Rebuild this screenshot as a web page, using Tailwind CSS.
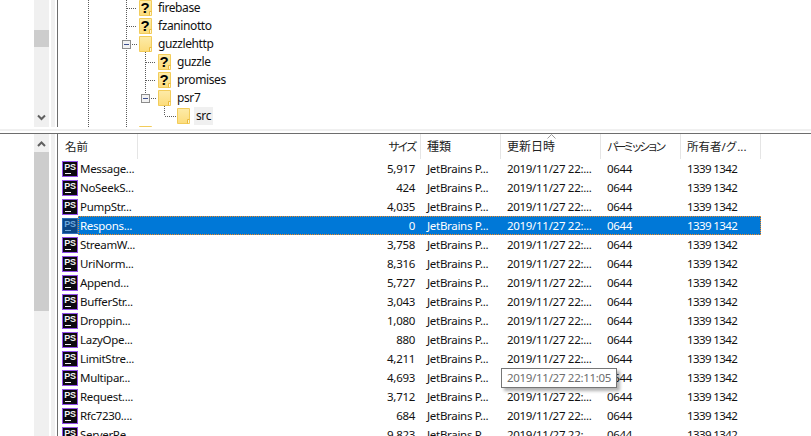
<!DOCTYPE html>
<html lang="ja">
<head>
<meta charset="utf-8">
<script src="https://cdn.jsdelivr.net/npm/@tailwindcss/browser@4"></script>
</head>
<body class="bg-white overflow-hidden">
<svg width="0" height="0" class="absolute">
  <defs>
    <linearGradient id="fg" x1="0" y1="0" x2="0" y2="1"><stop offset="0" stop-color="#fdeba8"/><stop offset="1" stop-color="#fcdc7c"/></linearGradient>
    <symbol id="folder" viewBox="0 0 13 16">
      <path d="M.5.5h12v15H.5z" fill="url(#fg)" stroke="#f2cc5a"/>
      <path d="M10.5 15.5v-4h2" fill="none" stroke="#ebba3c"/>
      <path d="M11 12h1v3h-1z" fill="#fff6d4"/>
    </symbol>
    <symbol id="unknown" viewBox="0 0 13 16">
      <path d="M.5.5h12v15H.5z" fill="url(#fg)" stroke="#f2cc5a"/>
      <path d="M10.5 15.5v-4h2" fill="none" stroke="#ebba3c"/>
      <path d="M11 12h1v3h-1z" fill="#fff6d4"/>
      <text x="6" y="13" text-anchor="middle" font-family="Liberation Sans" font-weight="700" font-size="15" fill="#000">?</text>
    </symbol>
    <symbol id="ps" viewBox="0 0 16 16">
      <rect x=".5" y=".5" width="15" height="15" fill="#0c0910" stroke="#9350ea"/>
      <text x="8" y="9" text-anchor="middle" font-family="Liberation Sans" font-weight="700" font-size="9" fill="#f2f2f2">PS</text>
      <rect x="3" y="12" width="6" height="1" fill="#f2f2f2"/>
    </symbol>
    <symbol id="pssel" viewBox="0 0 16 16">
      <rect x=".5" y=".5" width="15" height="15" fill="#0b4684" stroke="#2f6db8"/>
      <text x="8" y="9" text-anchor="middle" font-family="Liberation Sans" font-weight="700" font-size="9" fill="#6fa9dc">PS</text>
      <rect x="3" y="12" width="6" height="1" fill="#6fa9dc"/>
    </symbol>
  </defs>
</svg>

<div class="relative flex flex-col w-[811px] h-[436px] overflow-hidden font-['Noto_Sans','Noto_Sans_CJK_JP',sans-serif] text-[11.5px] tracking-[-0.3px] text-[#111]">

  <!-- top pane -->
  <section class="flex h-[127px] shrink-0">
    <div class="w-[34px] shrink-0"></div>
    <div class="relative w-[15px] shrink-0 bg-[#f0f0f0]">
      <div class="absolute top-[30px] left-0 w-[15px] h-[17px] bg-[#cdcdcd]"></div>
      <svg class="absolute left-[3px] top-[114px]" width="9" height="8" viewBox="0 0 9 8"><path d="M1 1.5l3.5 3.5L8 1.5" fill="none" stroke="#606060" stroke-width="2"/></svg>
    </div>
    <div class="w-[2px] shrink-0"></div>
    <div class="w-[4px] shrink-0 bg-[#f0f0f0]"></div>
    <div class="w-[2px] shrink-0"></div>
    <div class="relative flex-1 border-l-[1px] border-[#6d6d6d] overflow-hidden">
      <svg class="absolute left-[-58px] top-0" width="300" height="127" viewBox="0 0 300 127" fill="none" stroke="#5a5a5a" stroke-dasharray="1 1" shape-rendering="crispEdges">
        <path d="M88.5 0V127"/>
        <path d="M126.5 0V40M126.5 50V127"/>
        <path d="M127 8.5H137M127 26.5H137M132 44.5H138"/>
        <path d="M145.5 52V94"/>
        <path d="M146 62.5H156M146 80.5H156M151 98.5H157"/>
        <path d="M164.5 104V116M165 116.5H176"/>
      </svg>
      <svg class="absolute left-[64px] top-[40px]" width="10" height="10" viewBox="0 0 10 10"><rect x=".5" y=".5" width="8" height="8" fill="#f2f2f2" stroke="#8c8c8c"/><path d="M2 4.5h5" stroke="#3d4f8f"/></svg>
      <svg class="absolute left-[83px] top-[94px]" width="10" height="10" viewBox="0 0 10 10"><rect x=".5" y=".5" width="8" height="8" fill="#f2f2f2" stroke="#8c8c8c"/><path d="M2 4.5h5" stroke="#3d4f8f"/></svg>
      <ul class="relative -mt-px text-[12px] tracking-[-0.4px]">
        <li class="flex items-center h-[18px] pl-[81px] gap-[6px]"><svg class="shrink-0" width="13" height="16"><use href="#unknown"/></svg><span>firebase</span></li>
        <li class="flex items-center h-[18px] pl-[81px] gap-[6px]"><svg class="shrink-0" width="13" height="16"><use href="#unknown"/></svg><span>fzaninotto</span></li>
        <li class="flex items-center h-[18px] pl-[81px] gap-[6px]"><svg class="shrink-0" width="13" height="16"><use href="#folder"/></svg><span>guzzlehttp</span></li>
        <li class="flex items-center h-[18px] pl-[100px] gap-[6px]"><svg class="shrink-0" width="13" height="16"><use href="#unknown"/></svg><span>guzzle</span></li>
        <li class="flex items-center h-[18px] pl-[100px] gap-[6px]"><svg class="shrink-0" width="13" height="16"><use href="#unknown"/></svg><span>promises</span></li>
        <li class="flex items-center h-[18px] pl-[100px] gap-[6px]"><svg class="shrink-0" width="13" height="16"><use href="#folder"/></svg><span>psr7</span></li>
        <li class="flex items-center h-[18px] pl-[119px] gap-[4px]"><svg class="shrink-0" width="13" height="16"><use href="#folder"/></svg><span class="bg-[#f0f0f0] px-[2px] h-[18px] leading-[18px]">src</span></li>
        <li class="flex items-center h-[18px] pl-[81px] gap-[6px]"><svg class="shrink-0" width="13" height="16"><use href="#folder"/></svg><span></span></li>
      </ul>
    </div>
  </section>

  <!-- splitter -->
  <div class="h-[6px] shrink-0 flex flex-col"><div class="h-[2px]"></div><div class="h-[2px] bg-[#f0f0f0]"></div></div>

  <!-- bottom pane -->
  <section class="flex flex-1 min-h-0 border-t border-[#6d6d6d]">
    <div class="w-[34px] shrink-0"></div>
    <div class="relative w-[15px] shrink-0 bg-[#f0f0f0]">
      <svg class="absolute left-[3px] top-[6px]" width="9" height="8" viewBox="0 0 9 8"><path d="M1 6l3.5-3.5L8 6" fill="none" stroke="#606060" stroke-width="2"/></svg>
      <div class="absolute top-[18px] left-0 w-[15px] h-[159px] bg-[#cdcdcd]"></div>
    </div>
    <div class="w-[2px] shrink-0"></div>
    <div class="w-[4px] shrink-0 bg-[#f0f0f0]"></div>
    <div class="w-[2px] shrink-0"></div>
    <div class="flex-1 border-l-[1px] border-[#6d6d6d] overflow-hidden">
      <!-- header -->
      <div class="relative flex h-[25px] w-[703px] text-[#222] tracking-normal">
        <span class="w-[80px] pl-[7px] pt-[4px] border-r border-[#e5e5e5]">名前</span>
        <span class="w-[283px] pr-[5px] pt-[4px] text-right border-r border-[#e5e5e5] tracking-[-2.5px]">サイズ</span>
        <span class="w-[80px] pl-[6px] pt-[4px] border-r border-[#e5e5e5] text-[12px]">種類</span>
        <span class="w-[100px] pl-[6px] pt-[4px] border-r border-[#e5e5e5] text-[12px]">更新日時</span>
        <span class="w-[80px] pl-[6px] pt-[4px] border-r border-[#e5e5e5] whitespace-nowrap tracking-[-3.5px]">パーミッション</span>
        <span class="w-[80px] pl-[6px] pt-[4px] border-r border-[#e5e5e5] whitespace-nowrap">所有者/グ...</span>
        <svg class="absolute left-[489px] top-0" width="9" height="5" viewBox="0 0 9 5"><path d="M.5 4.5l4-4 4 4" fill="none" stroke="#9a9a9a"/></svg>
      </div>
      <!-- rows -->
      <div class="flex flex-col">
        <div class="flex h-[19px] items-center pl-[4px]"><svg class="shrink-0" width="16" height="16"><use href="#ps"/></svg><span class="w-[59px] pl-[2px] whitespace-nowrap">Message...</span><span class="w-[278px] text-right">5,917</span><span class="w-[86px] ml-[12px]">JetBrains P...</span><span class="w-[100px] ml-[-6px]">2019/11/27 22:...</span><span class="w-[80px]">0644</span><span class="tracking-[-0.6px]">1339 1342</span></div>
        <div class="flex h-[19px] items-center pl-[4px]"><svg class="shrink-0" width="16" height="16"><use href="#ps"/></svg><span class="w-[59px] pl-[2px] whitespace-nowrap">NoSeekS...</span><span class="w-[278px] text-right">424</span><span class="w-[86px] ml-[12px]">JetBrains P...</span><span class="w-[100px] ml-[-6px]">2019/11/27 22:...</span><span class="w-[80px]">0644</span><span class="tracking-[-0.6px]">1339 1342</span></div>
        <div class="flex h-[19px] items-center pl-[4px]"><svg class="shrink-0" width="16" height="16"><use href="#ps"/></svg><span class="w-[59px] pl-[2px] whitespace-nowrap">PumpStr...</span><span class="w-[278px] text-right">4,035</span><span class="w-[86px] ml-[12px]">JetBrains P...</span><span class="w-[100px] ml-[-6px]">2019/11/27 22:...</span><span class="w-[80px]">0644</span><span class="tracking-[-0.6px]">1339 1342</span></div>
        <div class="flex h-[19px] items-center pl-[4px]"><svg class="shrink-0" width="16" height="16"><use href="#pssel"/></svg><div class="flex items-center w-[683px] h-[19px] bg-[#0078d7] text-white border border-dotted border-[#f08a24]"><span class="w-[58px] pl-[1px] whitespace-nowrap">Respons...</span><span class="w-[278px] text-right">0</span><span class="w-[86px] ml-[12px]">JetBrains P...</span><span class="w-[100px] ml-[-6px]">2019/11/27 22:...</span><span class="w-[80px]">0644</span><span class="tracking-[-0.6px]">1339 1342</span></div></div>
        <div class="flex h-[19px] items-center pl-[4px]"><svg class="shrink-0" width="16" height="16"><use href="#ps"/></svg><span class="w-[59px] pl-[2px] whitespace-nowrap">StreamW...</span><span class="w-[278px] text-right">3,758</span><span class="w-[86px] ml-[12px]">JetBrains P...</span><span class="w-[100px] ml-[-6px]">2019/11/27 22:...</span><span class="w-[80px]">0644</span><span class="tracking-[-0.6px]">1339 1342</span></div>
        <div class="flex h-[19px] items-center pl-[4px]"><svg class="shrink-0" width="16" height="16"><use href="#ps"/></svg><span class="w-[59px] pl-[2px] whitespace-nowrap">UriNorm...</span><span class="w-[278px] text-right">8,316</span><span class="w-[86px] ml-[12px]">JetBrains P...</span><span class="w-[100px] ml-[-6px]">2019/11/27 22:...</span><span class="w-[80px]">0644</span><span class="tracking-[-0.6px]">1339 1342</span></div>
        <div class="flex h-[19px] items-center pl-[4px]"><svg class="shrink-0" width="16" height="16"><use href="#ps"/></svg><span class="w-[59px] pl-[2px] whitespace-nowrap">Append...</span><span class="w-[278px] text-right">5,727</span><span class="w-[86px] ml-[12px]">JetBrains P...</span><span class="w-[100px] ml-[-6px]">2019/11/27 22:...</span><span class="w-[80px]">0644</span><span class="tracking-[-0.6px]">1339 1342</span></div>
        <div class="flex h-[19px] items-center pl-[4px]"><svg class="shrink-0" width="16" height="16"><use href="#ps"/></svg><span class="w-[59px] pl-[2px] whitespace-nowrap">BufferStr...</span><span class="w-[278px] text-right">3,043</span><span class="w-[86px] ml-[12px]">JetBrains P...</span><span class="w-[100px] ml-[-6px]">2019/11/27 22:...</span><span class="w-[80px]">0644</span><span class="tracking-[-0.6px]">1339 1342</span></div>
        <div class="flex h-[19px] items-center pl-[4px]"><svg class="shrink-0" width="16" height="16"><use href="#ps"/></svg><span class="w-[59px] pl-[2px] whitespace-nowrap">Droppin...</span><span class="w-[278px] text-right">1,080</span><span class="w-[86px] ml-[12px]">JetBrains P...</span><span class="w-[100px] ml-[-6px]">2019/11/27 22:...</span><span class="w-[80px]">0644</span><span class="tracking-[-0.6px]">1339 1342</span></div>
        <div class="flex h-[19px] items-center pl-[4px]"><svg class="shrink-0" width="16" height="16"><use href="#ps"/></svg><span class="w-[59px] pl-[2px] whitespace-nowrap">LazyOpe...</span><span class="w-[278px] text-right">880</span><span class="w-[86px] ml-[12px]">JetBrains P...</span><span class="w-[100px] ml-[-6px]">2019/11/27 22:...</span><span class="w-[80px]">0644</span><span class="tracking-[-0.6px]">1339 1342</span></div>
        <div class="flex h-[19px] items-center pl-[4px]"><svg class="shrink-0" width="16" height="16"><use href="#ps"/></svg><span class="w-[59px] pl-[2px] whitespace-nowrap">LimitStre...</span><span class="w-[278px] text-right">4,211</span><span class="w-[86px] ml-[12px]">JetBrains P...</span><span class="w-[100px] ml-[-6px]">2019/11/27 22:...</span><span class="w-[80px]">0644</span><span class="tracking-[-0.6px]">1339 1342</span></div>
        <div class="flex h-[19px] items-center pl-[4px]"><svg class="shrink-0" width="16" height="16"><use href="#ps"/></svg><span class="w-[59px] pl-[2px] whitespace-nowrap">Multipar...</span><span class="w-[278px] text-right">4,693</span><span class="w-[86px] ml-[12px]">JetBrains P...</span><span class="w-[100px] ml-[-6px]">2019/11/27 22:...</span><span class="w-[80px]">0644</span><span class="tracking-[-0.6px]">1339 1342</span></div>
        <div class="flex h-[19px] items-center pl-[4px]"><svg class="shrink-0" width="16" height="16"><use href="#ps"/></svg><span class="w-[59px] pl-[2px] whitespace-nowrap">Request....</span><span class="w-[278px] text-right">3,712</span><span class="w-[86px] ml-[12px]">JetBrains P...</span><span class="w-[100px] ml-[-6px]">2019/11/27 22:...</span><span class="w-[80px]">0644</span><span class="tracking-[-0.6px]">1339 1342</span></div>
        <div class="flex h-[19px] items-center pl-[4px]"><svg class="shrink-0" width="16" height="16"><use href="#ps"/></svg><span class="w-[59px] pl-[2px] whitespace-nowrap">Rfc7230....</span><span class="w-[278px] text-right">684</span><span class="w-[86px] ml-[12px]">JetBrains P...</span><span class="w-[100px] ml-[-6px]">2019/11/27 22:...</span><span class="w-[80px]">0644</span><span class="tracking-[-0.6px]">1339 1342</span></div>
        <div class="flex h-[19px] items-center pl-[4px]"><svg class="shrink-0" width="16" height="16"><use href="#ps"/></svg><span class="w-[59px] pl-[2px] whitespace-nowrap">ServerRe...</span><span class="w-[278px] text-right">9,823</span><span class="w-[86px] ml-[12px]">JetBrains P...</span><span class="w-[100px] ml-[-6px]">2019/11/27 22:...</span><span class="w-[80px]">0644</span><span class="tracking-[-0.6px]">1339 1342</span></div>
      </div>
    </div>
  </section>

  <!-- tooltip -->
  <div class="absolute left-[501px] top-[368px] w-[116px] h-[20px] bg-white border border-[#767676] text-[#6d6d6d] pl-[5px] leading-[18px] whitespace-nowrap shadow-[3px_3px_3px_rgba(0,0,0,0.3)]">2019/11/27 22:11:05</div>
</div>
</body>
</html>
